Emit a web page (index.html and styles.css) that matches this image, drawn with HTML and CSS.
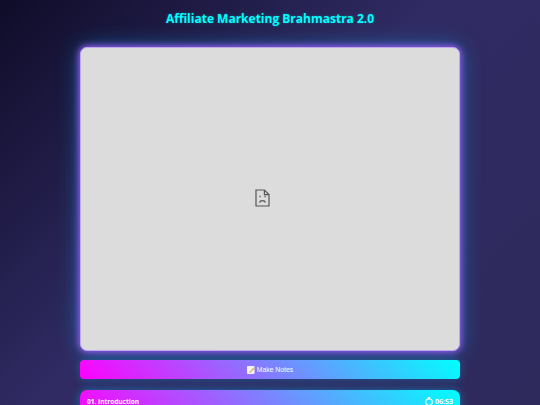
FILE: index.html
```
<!DOCTYPE html>
<html lang="en">
<head>
<meta charset="utf-8">
<title>Affiliate Marketing Brahmastra 2.0</title>
<link rel="stylesheet" href="styles.css">
</head>
<body>
<main class="page">
  <h1 class="title">Affiliate Marketing Brahmastra 2.0</h1>
  <section class="player">
    <svg class="sad" width="15" height="18" viewBox="0 0 15 18" fill="none" stroke="#555" stroke-width="1.2">
      <path d="M1 1h8.400l4.600 4.600V17H1z"/>
      <path d="M9.400 1v4.600h4.600"/>
      <path d="M4.500 7.500h1.200M9.500 7.500h1.200" stroke-width="1.400"/>
      <path d="M4.500 13.500c.8-2.600 5.200-2.600 6 0"/>
    </svg>
  </section>
  <button class="notes" type="button">
    <svg class="pad" width="8" height="8" viewBox="0 0 8 8">
      <rect width="7.500" height="8" rx="1" fill="#f4f4f4"/>
      <path d="M2 6.500 6.500 1.500 7.500 2.500 3 7z" fill="#e8b040"/>
    </svg>
    Make Notes
  </button>
  <div class="lesson">
    <span class="name">01. Introduction</span>
    <span class="time">
      <svg width="8" height="9" viewBox="0 0 8 9" fill="none" stroke="#fff" stroke-width="1.100">
        <circle cx="4" cy="5" r="3.300"/>
        <path d="M4 0v3M2.800.500h2.400"/>
      </svg>
      06:53
    </span>
  </div>
</main>
</body>
</html>
```

FILE: styles.css
```
* { box-sizing: border-box; }
html, body { margin: 0; height: 100%; }
body {
  background: linear-gradient(135deg, #0f0c29, #302b63 46%, #2e2a5c);
  font-family: "Liberation Sans", Arial, sans-serif;
  overflow: hidden;
}
.page {
  height: 405px;
  padding: 0 80px;
  display: flex;
  flex-direction: column;
  overflow: hidden;
}
.title {
  margin: 0;
  height: 47px;
  padding-top: 11px;
  font-family: "Open Sans", sans-serif;
  font-size: 12px;
  line-height: 16px;
  font-weight: 700;
  text-align: center;
  color: #0ff;
  text-shadow: 0 0 3px rgba(0, 255, 255, .3);
  flex: none;
}
.player {
  flex: none;
  height: 304px;
  background: #dcdcdc;
  border: 1px solid #c0a8ec;
  border-radius: 7px;
  box-shadow: 0 0 6px #9a58ee, 0 0 9px rgba(138, 80, 230, .8), 0 0 22px rgba(0, 190, 255, .45);
  display: flex;
  align-items: center;
  justify-content: center;
  padding: 0 16px 2px 0;
}
.notes {
  flex: none;
  margin-top: 9px;
  height: 19px;
  border: 0;
  border-radius: 4px;
  background: linear-gradient(45deg, #f0f, #0ff);
  box-shadow: 0 0 8px rgba(0, 190, 255, .35);
  color: #fff;
  font: 6.800px "Liberation Sans", Arial, sans-serif;
  display: flex;
  align-items: center;
  justify-content: center;
  gap: 2px;
  padding: 0;
}
.lesson {
  flex: none;
  margin-top: 11px;
  height: 30px;
  border-radius: 7px;
  background: linear-gradient(45deg, #f0f, #0ff);
  box-shadow: 0 0 10px rgba(0, 190, 255, .45);
  color: #fff;
  font: 700 6.500px "Open Sans", sans-serif;
  padding: 7px 7px 0;
  display: flex;
  justify-content: space-between;
  align-items: flex-start;
}
.time { display: flex; align-items: center; gap: 2px; font-size: 7px; }
```
